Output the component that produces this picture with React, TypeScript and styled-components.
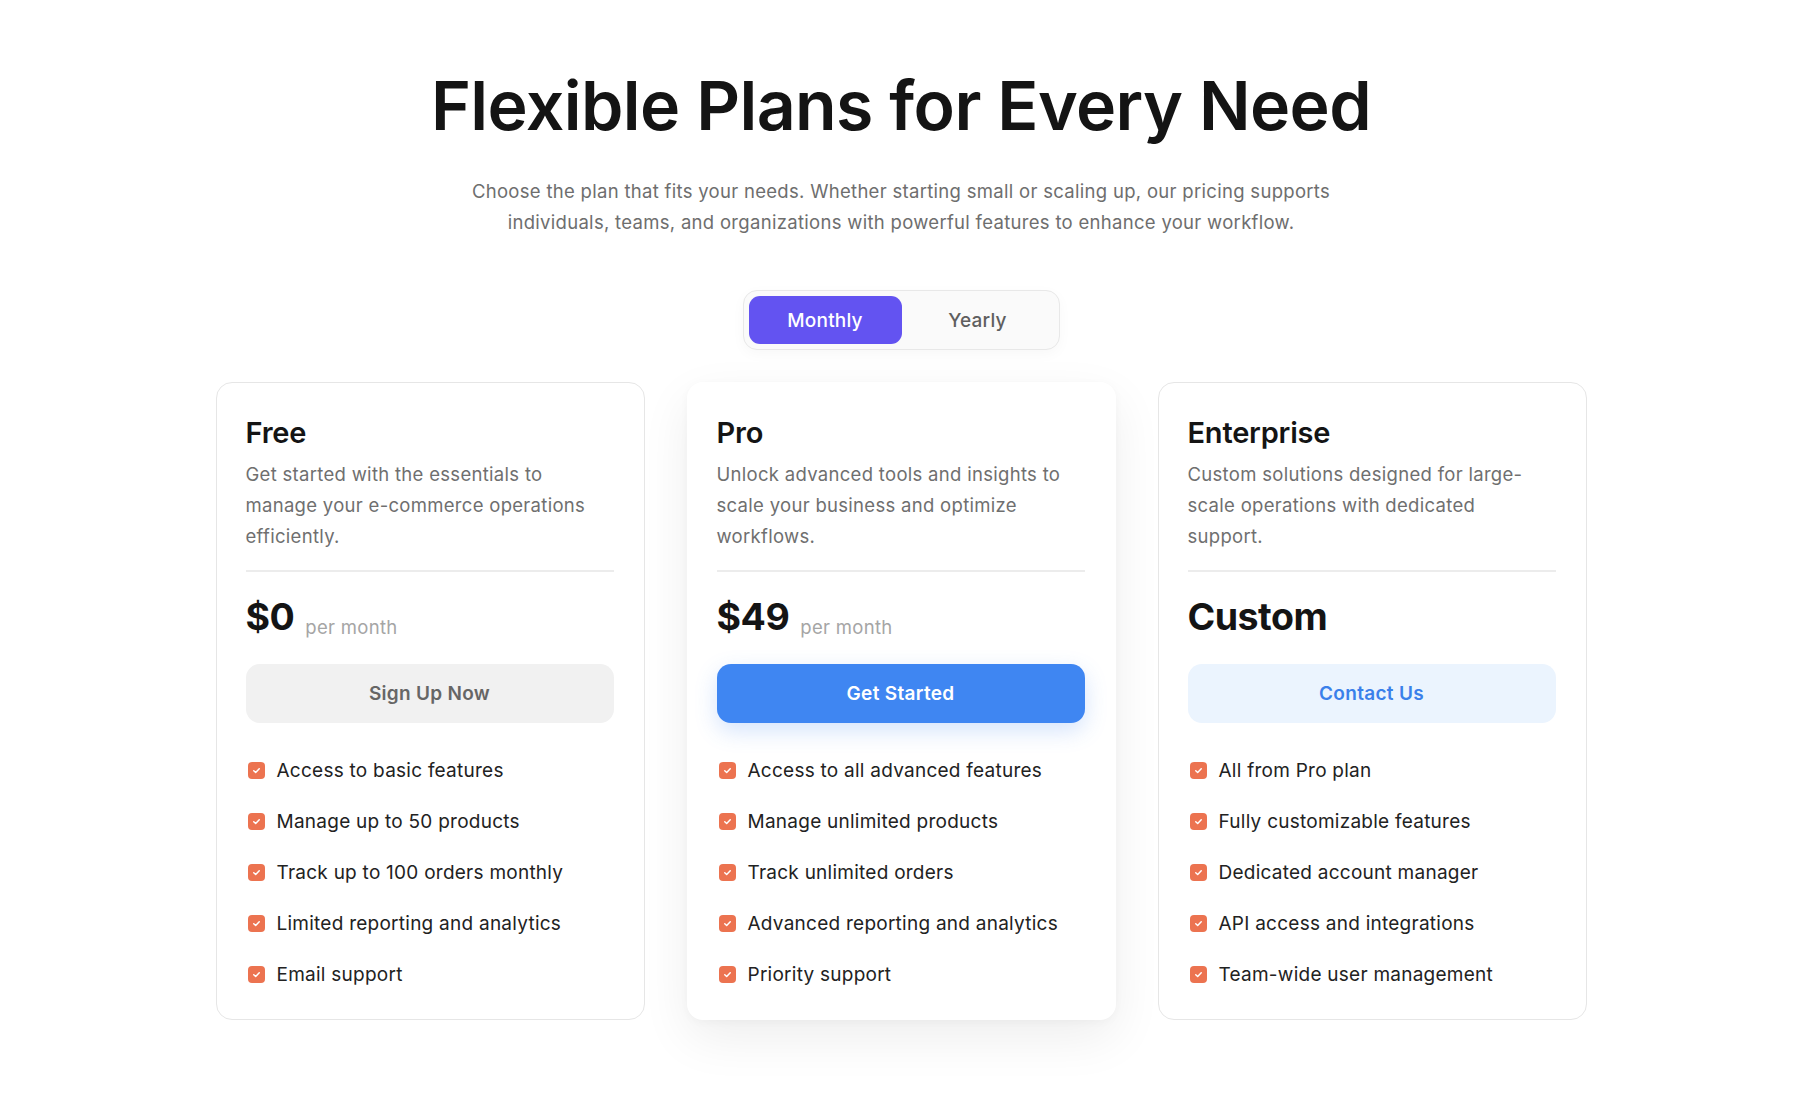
import React, { useState } from "react";
import styled, { createGlobalStyle } from "styled-components";

const Global = createGlobalStyle`
  html, body { margin: 0; padding: 0; background: #ffffff; }
  body { font-family: Inter, "Noto Sans", "Liberation Sans", sans-serif; color: #151515; -webkit-font-smoothing: antialiased; }
  * { box-sizing: border-box; }
`;

const Page = styled.main`
  width: 1804px;
  min-height: 1104px;
  display: flex;
  flex-direction: column;
  align-items: center;
  padding-top: 64px;
  padding-right: 2px;
`;

const Title = styled.h1`
  margin: 0;
  font-size: 68px;
  line-height: 82px;
  font-weight: 600;
  letter-spacing: -0.6px;
  color: #141414;
`;

const Subtitle = styled.p`
  margin: 30px 0 0;
  width: 920px;
  text-align: center;
  font-size: 18.5px;
  line-height: 31px;
  color: #6e6e6e;
  letter-spacing: 0.3px;
`;

const Toggle = styled.div`
  margin-top: 52px;
  display: flex;
  padding: 5px;
  width: 317px;
  height: 60px;
  border: 1px solid #e8e8e8;
  border-radius: 14px;
  background: #fafafa;
  box-shadow: 0 4px 14px rgba(0, 0, 0, 0.03);
`;

const ToggleButton = styled.button<{ $active: boolean }>`
  flex: 0 0 153px;
  height: 48px;
  border: none;
  border-radius: 11px;
  font-family: inherit;
  font-size: 19px;
  font-weight: 500;
  letter-spacing: 0.2px;
  cursor: pointer;
  background: ${(p) => (p.$active ? "#6353f1" : "transparent")};
  color: ${(p) => (p.$active ? "#ffffff" : "#5f5f5f")};
  & + & { flex: 1; }
`;

const Cards = styled.section`
  margin-top: 32px;
  display: grid;
  grid-template-columns: repeat(3, 429px);
  gap: 42px;
`;

const Card = styled.article<{ $featured?: boolean }>`
  display: flex;
  flex-direction: column;
  padding: 30px 30px 30px 29px;
  height: 638px;
  border-radius: 16px;
  background: #ffffff;
  border: 1px solid ${(p) => (p.$featured ? "transparent" : "#e6e6e6")};
  box-shadow: ${(p) =>
    p.$featured ? "0 18px 50px rgba(0, 0, 0, 0.07), 0 2px 10px rgba(0,0,0,0.03)" : "none"};
`;

const PlanName = styled.h2`
  margin: 0;
  font-size: 29px;
  line-height: 40px;
  font-weight: 600;
  color: #141414;
  letter-spacing: -0.2px;
`;

const PlanDesc = styled.p`
  margin: 6px 0 0;
  font-size: 18.5px;
  line-height: 31px;
  color: #6f6f6f;
  letter-spacing: 0.3px;
  min-height: 93px;
`;

const Divider = styled.hr`
  margin: 18px 0 0;
  border: none;
  border-top: 2px solid #ececec;
`;

const PriceRow = styled.div`
  margin-top: 20px;
  display: flex;
  align-items: baseline;
  gap: 11px;
  height: 50px;
`;

const Price = styled.span`
  font-size: 37.5px;
  line-height: 50px;
  font-weight: 700;
  color: #141414;
  letter-spacing: -0.5px;
`;

const Period = styled.span`
  position: relative;
  top: 4px;
  font-size: 18.5px;
  color: #a5a5a5;
  letter-spacing: 0.3px;
`;

type Variant = "muted" | "primary" | "soft";

const CTA = styled.button<{ $variant: Variant }>`
  margin-top: 22px;
  height: 61px;
  width: 100%;
  border: none;
  border-radius: 14px;
  font-family: inherit;
  font-size: 19px;
  font-weight: 600;
  letter-spacing: 0.3px;
  cursor: pointer;
  background: ${(p) =>
    p.$variant === "primary" ? "#3f86f2" : p.$variant === "soft" ? "#ebf4fe" : "#f1f1f1"};
  color: ${(p) =>
    p.$variant === "primary" ? "#ffffff" : p.$variant === "soft" ? "#3a80ea" : "#666666"};
  box-shadow: ${(p) =>
    p.$variant === "primary" ? "0 8px 22px rgba(63, 134, 242, 0.22)" : "none"};
`;

const Features = styled.ul`
  list-style: none;
  margin: 32px 0 0;
  padding: 0;
  display: flex;
  flex-direction: column;
  gap: 21px;
`;

const Feature = styled.li`
  display: flex;
  align-items: center;
  gap: 12px;
  height: 30px;
  font-size: 19px;
  color: #222222;
  letter-spacing: 0.25px;
`;

const Check = styled.span`
  flex: 0 0 17px;
  width: 17px;
  height: 17px;
  margin-left: 2px;
  border-radius: 4px;
  background: #ec7350;
  display: flex;
  align-items: center;
  justify-content: center;
`;

const CheckIcon = () => (
  <Check>
    <svg width="11" height="11" viewBox="0 0 12 12" fill="none">
      <path d="M3 6.2 L5.1 8.2 L9 4" stroke="#fff" strokeWidth="1.6" strokeLinecap="round" strokeLinejoin="round" />
    </svg>
  </Check>
);

type Plan = {
  name: string;
  desc: string;
  price: string;
  period?: string;
  cta: string;
  variant: Variant;
  featured?: boolean;
  features: string[];
};

const plans: Plan[] = [
  {
    name: "Free",
    desc: "Get started with the essentials to manage your e-commerce operations efficiently.",
    price: "$0",
    period: "per month",
    cta: "Sign Up Now",
    variant: "muted",
    features: [
      "Access to basic features",
      "Manage up to 50 products",
      "Track up to 100 orders monthly",
      "Limited reporting and analytics",
      "Email support",
    ],
  },
  {
    name: "Pro",
    desc: "Unlock advanced tools and insights to scale your business and optimize workflows.",
    price: "$49",
    period: "per month",
    cta: "Get Started",
    variant: "primary",
    featured: true,
    features: [
      "Access to all advanced features",
      "Manage unlimited products",
      "Track unlimited orders",
      "Advanced reporting and analytics",
      "Priority support",
    ],
  },
  {
    name: "Enterprise",
    desc: "Custom solutions designed for large-scale operations with dedicated support.",
    price: "Custom",
    cta: "Contact Us",
    variant: "soft",
    features: [
      "All from Pro plan",
      "Fully customizable features",
      "Dedicated account manager",
      "API access and integrations",
      "Team-wide user management",
    ],
  },
];

export default function App() {
  const [billing, setBilling] = useState<"monthly" | "yearly">("monthly");
  return (
    <>
      <Global />
      <Page>
        <Title>Flexible Plans for Every Need</Title>
        <Subtitle>
          Choose the plan that fits your needs. Whether starting small or scaling up, our pricing supports
          individuals, teams, and organizations with powerful features to enhance your workflow.
        </Subtitle>
        <Toggle>
          <ToggleButton $active={billing === "monthly"} onClick={() => setBilling("monthly")}>
            Monthly
          </ToggleButton>
          <ToggleButton $active={billing === "yearly"} onClick={() => setBilling("yearly")}>
            Yearly
          </ToggleButton>
        </Toggle>
        <Cards>
          {plans.map((p) => (
            <Card key={p.name} $featured={p.featured}>
              <PlanName>{p.name}</PlanName>
              <PlanDesc>{p.desc}</PlanDesc>
              <Divider />
              <PriceRow>
                <Price>{p.price}</Price>
                {p.period && <Period>{p.period}</Period>}
              </PriceRow>
              <CTA $variant={p.variant}>{p.cta}</CTA>
              <Features>
                {p.features.map((f) => (
                  <Feature key={f}>
                    <CheckIcon />
                    {f}
                  </Feature>
                ))}
              </Features>
            </Card>
          ))}
        </Cards>
      </Page>
    </>
  );
}
